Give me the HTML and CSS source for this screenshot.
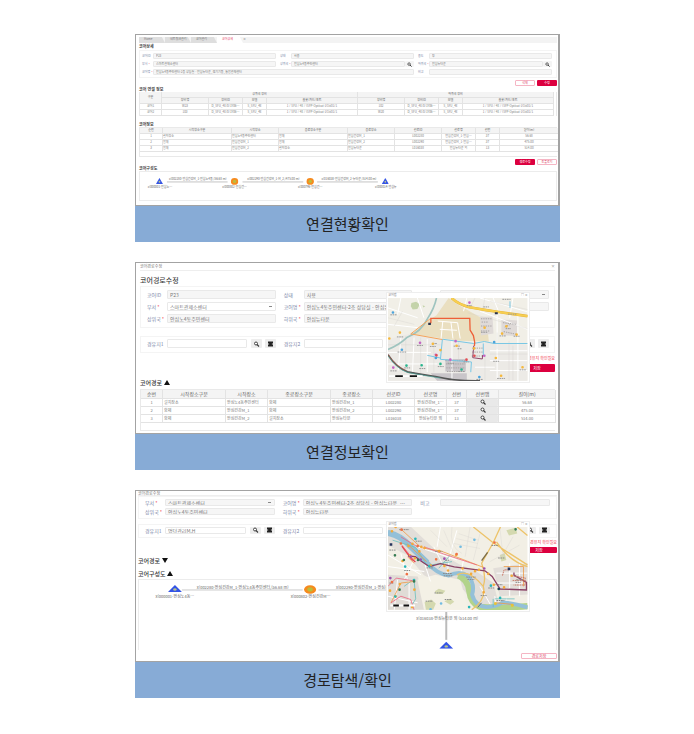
FILE: index.html
```html
<!DOCTYPE html>
<html lang="ko">
<head>
<meta charset="utf-8">
<meta name="viewport" content="width=device-width, initial-scale=1">
<title>연결현황</title>
<link rel="stylesheet" href="styles.css">
</head>
<body>
<svg class="defs" aria-hidden="true">
  <symbol id="i-search" viewBox="0 0 12 12"><circle cx="5" cy="5" r="3" fill="#fff" stroke="#333" stroke-width="1.8"/><path d="M7 7l4 4" stroke="#333" stroke-width="2.2"/></symbol>
  <symbol id="i-clear" viewBox="0 0 12 12"><path d="M1 1h10v10H1z" fill="#222"/><path d="M1 4l3 2-3 2M11 4L8 6l3 2" fill="#aaa"/></symbol>
  <symbol id="n-tri" viewBox="0 0 14 10" preserveAspectRatio="none"><path d="M7 0l7 10H0z" fill="#3454e6"/><circle cx="7" cy="6.500" r="1.700" fill="#b9c489"/></symbol>
  <symbol id="n-dot" viewBox="0 0 14 10" preserveAspectRatio="none"><ellipse cx="7" cy="5" rx="6.500" ry="4.800" fill="#f68a1e"/><ellipse cx="7" cy="5" rx="3" ry="2.400" fill="#bdbb3c"/></symbol>
</svg>
<main class="gallery">

<figure class="card">
  <section class="shot status">
    <nav class="tabs"><a href="#">Home</a><a href="#">네트워크관리</a><a href="#">코어관리</a><a href="#" class="on">코어상세</a><span>×</span></nav>
    <h2>코어상세</h2>
    <div class="panel fields">
      <div class="field"><label for="a1">코어ID</label><input id="a1" value="P23" readonly></div>
      <div class="field"><label for="a2">상태</label><input id="a2" value="사용" readonly></div>
      <div class="field"><label for="a3">용도</label><select id="a3"><option>망</option></select></div>
      <div class="field"><label for="a4">부서<i>*</i></label><select id="a4"><option>스마트관제소센터</option></select></div>
      <div class="field"><label for="a5">상위국<i>*</i></label><input id="a5" value="안심노4동주민센터" readonly><button class="find" aria-label="검색"><svg><use href="#i-search"/></svg></button></div>
      <div class="field"><label for="a6">하위국<i>*</i></label><input id="a6" value="안심뉴타운" readonly><button class="find" aria-label="검색"><svg><use href="#i-search"/></svg></button></div>
      <div class="field wide"><label for="a7">코어명<i>*</i></label><input id="a7" value="안심노4동주민센터-2층 상담실 - 안심뉴타운_경기기동_통합관제센터" readonly></div>
      <div class="field"><label for="a8">비고</label><input id="a8" readonly></div>
    </div>
    <div class="actions"><button class="line">삭제</button><button class="fill">수정</button></div>
    <h2>코어 연결 정보</h2>
    <div class="scroll">
      <table class="links">
        <colgroup><col><col><col><col><col><col><col><col><col></colgroup>
        <thead>
          <tr><th rowspan="2">구분</th><th colspan="4">상위국 장비</th><th colspan="4">하위국 장비</th></tr>
          <tr><th>장비명</th><th>장비ID</th><th>모델</th><th>슬롯/카드/포트</th><th>장비명</th><th>장비ID</th><th>모델</th><th>슬롯/카드/포트</th></tr>
        </thead>
        <tbody>
          <tr><td>코어1</td><td>W23</td><td>D_SFU_4E/0/1Y06…</td><td>S_SFU_4E</td><td>1 / SFU / 4E / (SFP-Optical-1G)#01/1</td><td>102</td><td>D_SFU_4E/0/1Y06…</td><td>S_SFU_4E</td><td>1 / SFU / 4E / (SFP-Optical-1G)#01/1</td></tr>
          <tr><td>코어2</td><td>103</td><td>D_SFU_4E/0/1Y06…</td><td>S_SFU_4E</td><td>1 / SFU / 4E / (SFP-Optical-1G)#01/1</td><td>W20</td><td>D_SFU_4E/0/1Y06…</td><td>S_SFU_4E</td><td>1 / SFU / 4E / (SFP-Optical-1G)#01/1</td></tr>
        </tbody>
      </table>
    </div>
    <h2 class="spaced">코어정보</h2>
    <div class="sheet">
      <table class="cores">
        <colgroup><col><col><col><col><col><col><col><col><col></colgroup>
        <thead><tr><th>순번</th><th>시작장소구분</th><th>시작장소</th><th>종료장소구분</th><th>종료장소</th><th>선로ID</th><th>선로명</th><th>선번</th><th>길이(m)</th></tr></thead>
        <tbody>
          <tr><td>1</td><td>설치장소</td><td>안심노4동주민센터</td><td>함체</td><td>안심건강M_1</td><td>L002280</td><td>안심건강M_1-안심…</td><td>37</td><td>56.68</td></tr>
          <tr><td>2</td><td>함체</td><td>안심건강M_1</td><td>함체</td><td>안심건강M_2</td><td>L002290</td><td>안심건강M_1-안심…</td><td>37</td><td>475.00</td></tr>
          <tr><td>3</td><td>함체</td><td>안심건강M_2</td><td>설치장소</td><td>안심뉴타운</td><td>L016038</td><td>안심뉴타운 외</td><td>13</td><td>514.00</td></tr>
        </tbody>
      </table>
    </div>
    <div class="actions"><button class="fill">경로수정</button><button class="line">토폴로지</button></div>
    <h2>코어구성도</h2>
    <svg class="diagram" viewBox="0 0 418 28" role="img" aria-label="코어구성도">
      <path d="M27 10H88M103 10H164M178 10H239" stroke="#aaa" stroke-width=".7"/>
      <use href="#n-tri" x="16" y="6" width="7" height="6"/><use href="#n-dot" x="91" y="6" width="8" height="7"/><use href="#n-dot" x="167" y="6" width="8" height="7"/><use href="#n-tri" x="243" y="6" width="7" height="6"/>
      <g class="t3"><text x="58" y="8">x(002280-안심건강M_1-안심노4동,(56.68 m)</text><text x="134" y="8">x(002290-안심건강M_1-M_2,(475.00 m)</text><text x="210" y="8">x(016038-안심건강M_2-뉴타운,(514.00 m)</text>
      <text x="20" y="16">x(000001-안심노…</text><text x="95" y="16">x(000802-안심건…</text><text x="171" y="16">x(000796-안심건…</text><text x="247" y="16">x(000014-안심뉴</text></g>
    </svg>
  </section>
  <figcaption>연결현황확인</figcaption>
</figure>

<figure class="card">
  <section class="shot edit">
    <header class="titlebar"><span>코어경로수정</span><span>×</span></header>
    <h2>코어경로수정</h2>
    <div class="panel fields">
      <div class="field"><label for="b1">코어ID</label><input id="b1" value="P23" readonly></div>
      <div class="field"><label for="b2">상태</label><input id="b2" value="사용" readonly></div>
      <div class="field"><label for="b3">용도</label><select id="b3"><option></option></select></div>
      <div class="field"><label for="b4">부서<i>*</i></label><select id="b4" class="open"><option>스마트관제소센터</option></select></div>
      <div class="field"><label for="b5">코어명<i>*</i></label><input id="b5" value="안심노4동주민센터-2층 상담실 - 안심뉴타운" readonly></div>
      <div class="field"><label for="b6">비고</label><input id="b6" readonly></div>
      <div class="field"><label for="b7">상위국<i>*</i></label><input id="b7" value="안심노4동주민센터" readonly></div>
      <div class="field"><label for="b8">하위국<i>*</i></label><input id="b8" value="안심뉴타운" readonly></div>
    </div>
    <div class="panel fields route">
      <div class="field"><label for="b9">경유지1</label><input id="b9"><button class="ico" aria-label="검색"><svg><use href="#i-search"/></svg></button><button class="ico" aria-label="지우기"><svg><use href="#i-clear"/></svg></button></div>
      <div class="field"><label for="b10">경유지2</label><input id="b10"><button class="ico" aria-label="검색"><svg><use href="#i-search"/></svg></button><button class="ico" aria-label="지우기"><svg><use href="#i-clear"/></svg></button></div>
      <div class="field"><label for="b11">경유지3</label><input id="b11"><button class="ico" aria-label="검색"><svg><use href="#i-search"/></svg></button><button class="ico" aria-label="지우기"><svg><use href="#i-clear"/></svg></button></div>
    </div>
    <p class="note">경유지 확인필요</p>
    <div class="actions"><button class="fill">저장</button></div>
    <h3>코어경로 <b class="up"></b></h3>
    <div class="sheet">
      <table class="paths">
        <colgroup><col><col><col><col><col><col><col><col><col><col></colgroup>
        <thead><tr><th>순번</th><th>시작장소구분</th><th>시작장소</th><th>종료장소구분</th><th>종료장소</th><th>선로ID</th><th>선로명</th><th>선번</th><th>선번맵</th><th>길이(m)</th></tr></thead>
        <tbody>
          <tr><td>1</td><td>설치장소</td><td>안심노4동주민센터</td><td>함체</td><td>안심건강M_1</td><td>L002280</td><td>안심건강M_1…</td><td>37</td><td><button class="map-btn" aria-label="선번맵"><svg><use href="#i-search"/></svg></button></td><td>56.68</td></tr>
          <tr><td>2</td><td>함체</td><td>안심건강M_1</td><td>함체</td><td>안심건강M_2</td><td>L002290</td><td>안심건강M_1…</td><td>37</td><td><button class="map-btn" aria-label="선번맵"><svg><use href="#i-search"/></svg></button></td><td>475.00</td></tr>
          <tr><td>3</td><td>함체</td><td>안심건강M_2</td><td>설치장소</td><td>안심뉴타운</td><td>L016038</td><td>안심뉴타운 외</td><td>13</td><td><button class="map-btn" aria-label="선번맵"><svg><use href="#i-search"/></svg></button></td><td>514.00</td></tr>
        </tbody>
      </table>
    </div>
    <aside class="map">
      <header><span>코어맵</span><span>□ ×</span></header>
      <svg viewBox="21 120 423 251" role="img" aria-label="경로 지도">
        <path d="M21 120H444V371H21z" fill="#f1efe7"/>
        <path d="M21 245L90 228 185 245 250 252 444 262V371H21z" fill="#eceae6"/>
        <path d="M168 172L205 120 225 135 320 190 327 252 240 250 92 230 148 185z" fill="#eadfc0"/>
        <path d="M92 135l14-4 12 8-8 14-14 2-6-10zM126 142l8 3-6 4z" fill="#c4d3aa"/>
        <path d="M300 178l38-2 3 52-38 6zM365 185l48 3v48l-48-4z" fill="#dfdad8"/>
        <path d="M195 305h62v38h-62zM150 348h110v23h-90z" fill="#c9c5c9"/>
        <g fill="none" stroke="#fff" stroke-width="3"><path d="M172 190l60 5 8 48M187 192l-5 50M212 193l6 50M178 215l52 3M21 150l90 30M60 120l-10 50M110 120l20 60M21 200l90 10M300 160l144 55M260 120l-10 40M352 165v200M415 175v196M330 280h114M330 310h114M330 340h114M21 285h130M60 240l-8 100M100 240l-5 110M140 245v100M21 320h150M300 120l144 42M340 120l20 50M400 120l-10 60M285 330h60M215 250v120"/></g>
        <g fill="none" stroke="#d2cfca"><path d="M285 120l-15 30M315 120l-8 40M330 130l114 25M262 165l182 48M352 225v50M388 250v120M444 290H330M21 262h160M75 235v110M120 240v110M160 250v95M235 252v60M315 290v80M400 265v105M65 160l-25 45M21 180l80 20"/></g>
        <g fill="none" stroke="#a8a3a3" stroke-width="3" stroke-dasharray="4 3"><path d="M303 183h33M305 193h20M303 205h33M303 220h28M370 195l40 5M375 208l15-7M372 222l38 8M276 272h35M276 284h35M275 296h30M195 310h60M197 320h58M198 332h57M200 343h54"/></g>
        <path d="M168 120Q162 150 140 184Q122 222 78 240Q55 262 21 276" fill="none" stroke="#9fc4bf" stroke-width="5"/>
        <path d="M214 120Q232 138 268 148Q320 158 444 175" fill="none" stroke="#e3b13a" stroke-width="8"/><path d="M214 120Q232 138 268 148Q320 158 444 175" fill="none" stroke="#f7cf50" stroke-width="6"/>
        <path d="M444 258H343L313 252 280 258 186 245 180 306 274 314 272 345M310 258v38M140 294l40 8M391 130v20" fill="none" stroke="#77c6e4" stroke-width="3"/>
        <path d="M150 182L90 229 186 246" fill="none" stroke="#f4a259" stroke-width="3"/>
        <path d="M21 292Q45 330 80 344Q120 352 165 358Q220 372 300 371" fill="none" stroke="#555" stroke-width="5"/><path d="M21 295Q45 333 80 346Q130 355 180 363" fill="none" stroke="#49aa9e" stroke-width="2"/><path d="M21 291Q42 325 75 340" fill="none" stroke="#d75c46" stroke-width="1.500"/>
        <path d="M281 265l-3 36 29 4 1-12" fill="none" stroke="#8e4668" stroke-width="3"/>
        <path d="M147 198l4-3v-13H269l1 35 10 17 4 20-1 12" fill="none" stroke="#ee6038" stroke-width="4"/>
        <g fill="none" stroke="#999" stroke-width="3" stroke-dasharray="5 2"><path d="M28 171h20M368 124h25M310 147h17M385 169h25M260 143h16M48 238h20M220 266h20M109 264h18M148 267h18M303 224h20M359 235h20M402 236h18M378 213h16M50 284h26M232 274h12M70 332h18M116 334h18M172 328h18M202 318h20M234 343h20M28 341h20M289 367h20M352 364h24M420 338h20M340 312h18M250 314h16M157 258h14"/></g>
        <g fill="none" stroke-linecap="round" stroke-width="8"><path d="M57 225h.1M157 259h.1M229 265h.1M314 210h.1M367 228h.1M411 231h.1M380 206h.1M348 302h.1M429 330h.1M364 356h.1M25 243h.1M180 278h.1M282 273h.1" stroke="#f6b83b"/><path d="M77 325h.1M123 324h.1M180 320h.1M244 337h.1" stroke="#29b58e"/><path d="M36 164h.1M63 277h.1M343 254h.1M298 360h.1M166 302h.1" stroke="#4ca4dc"/><path d="M118 256h.1M268 134h.1M226 251h.1M210 307h.1M37 331h.1M166 292h.1M313 295h.1" stroke="#c465c4"/><path d="M259 307h.1M168 294h.1M283 295h.1" stroke="#e34e54"/></g>
        <path d="M143 195h8v7h-8zM345 163h9v6h-9z" fill="#27324d"/><path d="M24 354h102v6H24z" fill="#fff"/><path d="M43 354h23v6H43zM87 354h22v6H87z" fill="#111"/>
      </svg>
    </aside>
  </section>
  <figcaption>연결정보확인</figcaption>
</figure>

<figure class="card">
  <section class="shot edit trace">
    <header class="titlebar"><span>코어경로수정</span></header>
    <div class="panel fields">
      <div class="field"><label for="c1">부서<i>*</i></label><select id="c1"><option>스마트관제소센터</option></select></div>
      <div class="field"><label for="c2">코어명<i>*</i></label><input id="c2" value="안심노4동주민센터-2층 상담실 - 안심뉴타운_경…" readonly></div>
      <div class="field"><label for="c3">비고</label><input id="c3" readonly></div>
      <div class="field"><label for="c4">상위국<i>*</i></label><input id="c4" value="안심노4동주민센터" readonly></div>
      <div class="field"><label for="c5">하위국<i>*</i></label><input id="c5" value="안심뉴타운" readonly></div>
    </div>
    <div class="panel fields route">
      <div class="field"><label for="c6">경유지1</label><input id="c6" value="명덕관리M.H"><button class="ico" aria-label="검색"><svg><use href="#i-search"/></svg></button><button class="ico" aria-label="지우기"><svg><use href="#i-clear"/></svg></button></div>
      <div class="field"><label for="c7">경유지2</label><input id="c7"><button class="ico" aria-label="검색"><svg><use href="#i-search"/></svg></button><button class="ico" aria-label="지우기"><svg><use href="#i-clear"/></svg></button></div>
      <div class="field"><label for="c8">경유지3</label><input id="c8"><button class="ico" aria-label="검색"><svg><use href="#i-search"/></svg></button><button class="ico" aria-label="지우기"><svg><use href="#i-clear"/></svg></button></div>
    </div>
    <p class="note">경유지 확인필요</p>
    <div class="actions"><button class="fill">저장</button></div>
    <h3>코어경로 <b class="down"></b></h3>
    <h3>코어구성도 <b class="up"></b></h3>
    <svg class="diagram" viewBox="0 0 418 70" role="img" aria-label="코어구성도">
      <path d="M43 10H164M180 10H300" stroke="#bbb" stroke-width=".8"/><path d="M308 11V60" stroke="#bbb" stroke-width="2"/>
      <use href="#n-tri" x="29" y="5" width="14" height="7"/><use href="#n-dot" x="165" y="5" width="13" height="9"/><use href="#n-tri" x="301" y="62" width="14" height="7"/>
      <g class="t4"><text x="104" y="9">x(002280-안심건강M_1-안심노4동주민센터,(56.68 m)</text><text x="240" y="9">x(002290-안심건강M_1-안심건강M_2,(475.00 m)</text><text x="36" y="18">x(000001-안심노4동…</text><text x="172" y="18">x(000802-안심건강M…</text><text x="309" y="40">x(016038-안심뉴타운 외 (514.00 m)</text></g>
    </svg>
    <div class="actions"><button class="line">경로저장</button></div>
    <aside class="map">
      <header><span>코어맵</span><span>□ ×</span></header>
      <svg viewBox="21 120 423 251" role="img" aria-label="탐색 경로 지도">
        <path d="M21 120H444V371H21z" fill="#f2efe5"/>
        <path d="M21 120h70l80 75 70 40 40 15 60 40 20 81H300l-50-60-60-15-60-30-50-60-59-30zM340 245l104-15v95l-84 5z" fill="#e2ded9"/>
        <path d="M21 265l90 5 35 101H21z" fill="#e0dcd6"/>
        <path d="M110 280l55-15 75 15 25 91H130z" fill="#f4f1e6"/>
        <path d="M132 348l20-8 14 12-8 19h-22zM192 345l18-8 12 10-12 9zM163 315l12-8 20 6-8 10h-20zM360 205l15-5 5 20-15 5zM380 130l28-8 5 18-25 6z" fill="#d4d9af"/>
        <g fill="none" stroke="#fff" stroke-width="3"><path d="M21 205l100 60M60 200l20 80M100 220l-30 60M130 225l20 60M21 240l110 15M160 180l30 60M210 200l-10 60M250 220l-10 50M110 180l120 40M230 130l-20 70M180 120l-10 60M390 230v100M420 225v105M350 260h94M350 290h94M300 300l40 70M21 330l90 20M50 280l-10 91M85 280v91M345 330l5 41M380 335l5 36"/></g>
        <g fill="none" stroke="#d3d0ce"><path d="M215 120q-10 60 30 80M235 140l60 20M228 155l65 15M220 170l80 15M270 120l-15 90M300 140l-20 80M360 120l10 90M400 150l-40 70M330 225l90-50M190 130l30 70M150 130l50 50"/></g>
        <path d="M234 267Q263 280 267 312Q272 352 300 362Q345 368 444 360" fill="none" stroke="#b2d38b" stroke-width="19"/>
        <path d="M21 135Q60 145 90 180Q115 198 139 226Q168 262 205 267Q240 252 263 268Q286 292 276 325Q285 360 320 363Q350 362 368 349Q402 350 444 364" fill="none" stroke="#94c0d8" stroke-width="12"/>
        <path d="M21 138Q60 145 90 180L140 228" fill="none" stroke="#94c0d8" stroke-width="18"/>
        <g fill="none" stroke="#edc369" stroke-width="4"><path d="M280 120L340 168 444 235M362 120L340 168 305 230Q320 270 310 300Q320 340 275 371M413 120l31 26M230 265Q265 245 310 300M350 165q40 60 94 75"/></g>
        <g fill="none" stroke="#6cc0bd" stroke-width="2.500"><path d="M35 160l70 22 35 55 75-12M70 300l30-22 5 60-15 25M345 338h60M340 338v25M210 205l-35 40"/></g>
        <g fill="none" stroke="#ee9c4a" stroke-width="2.500"><path d="M62 128l60 55 60 10 130 50M78 170l60 55M372 240h60v60M350 350l50 5M100 285l-40 5-30 60M80 210l20 20"/></g>
        <g fill="none" stroke="#ec6680" stroke-width="2.500"><path d="M21 300l25-25 50 8M30 350l30-20 30 10 10 31M63 175l40 50M60 150l50 30M130 180l60 22 100 33"/></g>
        <path d="M63 178L92 217 104 226" fill="none" stroke="#e7474e" stroke-width="4"/>
        <path d="M82 208l22 2 18 14 24 16 34-9 42 10 93 12 22 17 24 38 80 3v-23l-38-22 0-8" fill="none" stroke="#894064" stroke-width="4"/>
        <path d="M388 250h-15l-5 18M395 268l42 6v22h-35M399 282h38" fill="none" stroke="#c97868" stroke-width="3" stroke-dasharray="5 2"/>
        <g fill="none" stroke="#8a8a8a" stroke-width="3" stroke-dasharray="5 2"><path d="M55 128h30M164 194h22M335 176h20M355 214h20M188 261h28M190 268h26M258 272h30M262 279h22M162 320h24M135 345h22M193 340h22M302 328h18M105 163h18M138 244h20M325 305h18M347 295h22M25 190h20M70 252h18M25 290h14M350 343h24M195 221h14M410 280h20M408 288h16"/></g>
        <g fill="none" stroke-linecap="round" stroke-width="8"><path d="M33 133h.1M44 120h.1M88 206h.1M65 223h.1M57 293h.1M101 310h.1M83 178h.1M102 215h.1M150 236h.1M192 238h.1M247 246h.1M285 254h.1M311 318h.1M325 262h.1M398 357h.1M347 352h.1M273 262h.1M203 252h.1M396 268h.1M44 330h.1M94 363h.1M95 171h.1M132 184h.1M176 193h.1M228 205h.1M297 250h.1M122 180h.1M116 194h.1M342 295h.1M27 313h.1M373 303h.1" stroke="#f3aa3a"/><path d="M104 156h.1M73 240h.1M146 239h.1M100 281h.1M43 331h.1M333 298h.1M361 335h.1M267 363h.1" stroke="#2bb6b8"/><path d="M62 128h.1M344 167h.1M111 178h.1M167 218h.1M60 170h.1M78 263h.1M33 287h.1M229 202h.1" stroke="#ef7145"/><path d="M69 220h.1M112 220h.1M42 206h.1M100 285h.1M56 310h.1M357 308h.1M408 127h.1" stroke="#357b52"/><path d="M192 216h.1M120 219h.1M313 246h.1M90 210h.1M28 275h.1" stroke="#9d51ae"/><path d="M283 159h.1M241 180h.1M182 352h.1M150 370h.1" stroke="#72bce2"/></g>
        <path d="M384 243h8v8h-8zM26 169h8v8h-8zM354 304h6v6h-6z" fill="#24335b"/><path d="M343 349h7v7h-7zM394 354h7v7h-7z" fill="#e5c736"/><path d="M293 364l12-14" stroke="#777" stroke-width="3"/><path d="M305 222l18-25" stroke="#776a46" stroke-width="4"/><path d="M28 355h75v6H28z" fill="#fff"/><path d="M37 355h17v6H37zM68 355h17v6H68z" fill="#111"/>
      </svg>
    </aside>
  </section>
  <figcaption>경로탐색/확인</figcaption>
</figure>
</main>
</body>
</html>
```

FILE: styles.css
```css
* { box-sizing: border-box; }
body { margin: 0; background: #fff; color: #7a7a7a; font-family: "Noto Sans CJK KR", "Liberation Sans", sans-serif; }
.defs { display: none; }
.gallery { display: flex; flex-direction: column; gap: 20px; padding: 34px 134px 36px 135px; }
.card { margin: 0; }
figcaption { background: #87abd6; color: #222; font-size: 15px; line-height: 36px; text-align: center; }

.shot { position: relative; border: 1px solid #a3a3a3; border-right-width: 2px; background: #fff; padding: 0 1px 0 3px; font-size: 3px; line-height: 5px; overflow: hidden; }
h2, h3, p { margin: 0; }
h2 { color: #444; font-size: 4px; line-height: 6px; font-weight: 700; }
input, select, button { font: inherit; color: inherit; margin: 0; padding: 0; border: 0; border-radius: 1px; min-width: 0; appearance: none; }
input, select { flex: 1; border: 1px solid #e9e9e9; background: #f6f6f6; padding: 0 2px; text-overflow: ellipsis; }
label { color: #7c88a8; flex: none; }
label i { margin-left: 1px; color: #f05565; font-style: normal; }
.panel { border: 1px solid #f4f4f4; }
.fields { display: grid; grid-template-columns: repeat(3, minmax(0, 1fr)); }
.field { display: flex; align-items: center; }
.wide { grid-column: span 2; }
.actions { display: flex; justify-content: flex-end; gap: 2px; }
.actions button { width: 20px; height: 6px; line-height: 4px; text-align: center; }
.actions .fill { background: #dc003f; color: #fff; }
.actions .line { background: #fff; border: 1px solid #f5b5c4; color: #dc4468; }

table { width: 100%; table-layout: fixed; border-collapse: separate; border-spacing: 0; }
th, td { border: solid #e3e3e3; border-width: 0 1px 1px 0; padding: 0; font-weight: 400; text-align: center; white-space: nowrap; overflow: hidden; }
th { background: #f4f4f4; color: #666; }
.sheet { border: solid #e9e9e9; border-width: 1px 0 1px 1px; }
.diagram { display: block; width: 100%; border: 1px solid #ececec; }
.diagram text { fill: #666; text-anchor: middle; }
.t3 { font-size: 3px; }
.t4 { font-size: 4px; }

.tabs { display: flex; height: 6px; margin-top: 2px; background: #f3f3f3; }
.tabs a { flex: 0 0 26px; padding-left: 5px; background: #dedede; color: #777; text-decoration: none; white-space: nowrap; clip-path: polygon(0 0, 88% 0, 100% 100%, 0 100%); }
.tabs .on { background: #fff; color: #e63b64; }
.status .panel { margin-top: 1px; padding: 1px 4px 1px 2px; column-gap: 4px; }
.status .field { height: 8px; }
.status label { width: 11px; white-space: nowrap; }
.status input, .status select { height: 6px; line-height: 4px; }
.find { width: 9px; height: 6px; background: #f4f4f4; }
.find svg { display: block; width: 5px; height: 5px; margin: auto; }
.status .actions { margin-top: 2px; }
.status .spaced { margin-top: 5px; }
.scroll { padding-right: 4px; border: solid #e9e9e9; border-width: 0 1px; }
.status .sheet { padding-bottom: 4px; }
.links col:nth-child(1) { width: 22px; }
.links col:nth-child(2), .links col:nth-child(6) { width: 47px; }
.links col:nth-child(3), .links col:nth-child(7) { width: 34px; }
.links col:nth-child(4), .links col:nth-child(8) { width: 24px; }
.links col:nth-child(5), .links col:nth-child(9) { width: 91px; }
.cores col:nth-child(1) { width: 23px; }
.cores col:nth-child(2), .cores col:nth-child(4) { width: 69px; }
.cores col:nth-child(3), .cores col:nth-child(5), .cores col:nth-child(6) { width: 47px; }
.cores col:nth-child(7) { width: 34px; }
.cores col:nth-child(8) { width: 24px; }
.cores col:nth-child(9) { width: 59px; }
.cores td:nth-child(n+2):nth-child(-n+5) { text-align: left; }
.status { padding-bottom: 4px; }

.edit { padding: 0 3px 2px 4px; font-size: 5px; line-height: 7px; }
.titlebar { display: flex; justify-content: space-between; height: 8px; font-size: 4px; border-bottom: 1px solid #eee; }
.edit h2 { margin-top: 3px; font-size: 7px; line-height: 12px; font-weight: 500; }
.edit h3 { margin-top: 5px; color: #333; font-size: 6px; line-height: 12px; font-weight: 500; }
.up, .down { display: inline-block; border: solid transparent; border-width: 0 3px 5px; border-bottom-color: #111; }
.down { border-width: 5px 3px 0; border-top-color: #111; }
.edit .panel { padding: 2px 5px 2px 6px; column-gap: 8px; }
.edit .field { height: 12px; }
.edit label { width: 20px; white-space: nowrap; }
.edit input, .edit select { height: 9px; line-height: 7px; }
.edit select { background: #f6f6f6 linear-gradient(#888, #888) right 3px center / 3px 1px no-repeat; }
.edit .open { background-color: #fff; }
.edit .route { margin-top: 8px; padding-top: 1px; padding-bottom: 2px; }
.edit .route input { background: #fff; margin-right: 4px; }
.ico { width: 11px; height: 9px; background: #ededed; }
.ico + .ico { margin-left: 3px; }
.ico svg { display: block; width: 7px; height: 6px; margin: auto; }
.note { margin-top: 1px; color: #f0354c; font-size: 4px; line-height: 8px; text-align: right; }
.edit .actions { margin-top: 2px; }
.edit .actions button { width: 36px; height: 8px; font-size: 4px; line-height: 6px; }
.edit th { line-height: 8px; }
.edit td { font-size: 4px; line-height: 7px; }
.edit .sheet { padding-bottom: 7px; }
.paths col:nth-child(1) { width: 22px; }
.paths col:nth-child(2), .paths col:nth-child(4) { width: 63px; }
.paths col:nth-child(3), .paths col:nth-child(5), .paths col:nth-child(6) { width: 42px; }
.paths col:nth-child(7), .paths col:nth-child(9) { width: 32px; }
.paths col:nth-child(8) { width: 20px; }
.paths col:nth-child(10) { width: 57px; }
.paths td:nth-child(n+2):nth-child(-n+5) { padding-left: 1px; text-align: left; }
.map-btn { display: block; width: 100%; height: 7px; background: #e9e9e9; }
.map-btn svg { display: block; width: 6px; height: 6px; margin: auto; }

.map { position: absolute; top: 29px; left: 59.3%; width: 34%; padding: 0 1px 1px; background: #fff; border: 1px solid #eee; font-size: 3px; line-height: 5px; }
.map header { display: flex; justify-content: space-between; }
.map svg { display: block; width: 100%; }

.trace { padding-left: 2px; padding-right: 1px; }
.trace .titlebar { height: 5px; line-height: 4px; }
.trace .panel { padding: 1px 6px 2px 6px; }
.trace .field { height: 9px; }
.trace input, .trace select { height: 7px; line-height: 5px; }
.trace .route { margin-top: 5px; padding-top: 1px; padding-bottom: 2px; }
.trace .ico { height: 7px; }
.trace .note { margin-top: 0; }
.trace .actions { margin-top: 1px; }
.trace .actions button { height: 6px; line-height: 4px; }
.trace h3 { margin-top: 3px; line-height: 10px; }
.trace .diagram { border-bottom: 0; }
.trace .diagram + .actions { margin-top: 3px; }
.trace .map { top: 30px; }
```
